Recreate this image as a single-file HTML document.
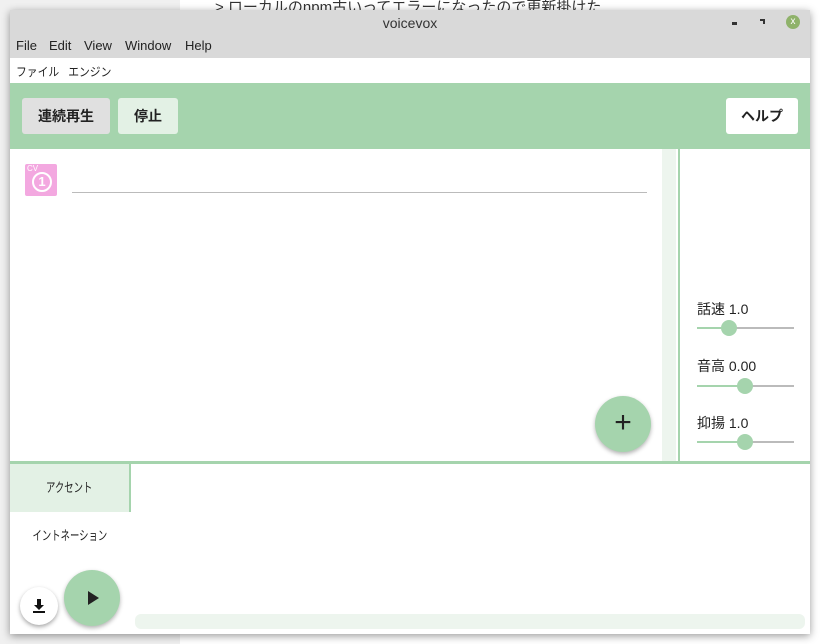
<!DOCTYPE html><html><head><meta charset="utf-8"><style>
body{margin:0;width:820px;height:644px;position:relative;background:#f0f0f0;font-family:"Liberation Sans","Noto Sans CJK JP",sans-serif;overflow:hidden}
.a{position:absolute}
.m{position:absolute;top:38px;font-size:13px;color:#222}
.btn{position:absolute;top:98px;height:36px;border-radius:3px;font-size:14px;font-weight:bold;display:flex;align-items:center;justify-content:center;color:#222}
.sl{position:absolute;left:697px;width:97px;height:2px;background:#bbb}
.sl i{position:absolute;left:0;top:0;height:2px;background:#a5d4ad}
.sl b{position:absolute;top:-7px;width:16px;height:16px;border-radius:50%;background:#a5d4ad}
.lb{position:absolute;left:697px;font-size:14px;color:#222}
.tab{position:absolute;left:10px;width:119px;height:48px;font-size:13px;text-align:center;line-height:48px;color:#222}
.tab span{display:inline-block;transform:scaleX(.72)}
</style></head><body>
<div class="a" style="left:180px;top:0;width:640px;height:644px;background:#fff"></div>
<div class="a" style="left:215px;top:-4px;font-size:15px;color:#333">&gt; ローカルのnpm古いってエラーになったので更新掛けた</div>
<div class="a" style="left:10px;top:10px;width:800px;height:624px;background:#fff;box-shadow:0 2px 8px rgba(0,0,0,.4)"></div>
<div class="a" style="left:10px;top:10px;width:800px;height:48px;background:#d9d9d9"></div>
<div class="a" style="left:10px;top:15px;width:800px;text-align:center;font-size:14px;color:#333">voicevox</div>
<div class="a" style="left:732px;top:22px;width:5px;height:3px;background:#333"></div>
<div class="a" style="left:760px;top:19px;width:5px;height:5px;border-top:2px solid #333;border-right:2px solid #333;box-sizing:border-box"></div>
<div class="a" style="left:786px;top:15px;width:14px;height:14px;border-radius:50%;background:#8fb26a;color:#fff;font-size:10px;text-align:center;line-height:14px">x</div>
<span class="m" style="left:16px">File</span><span class="m" style="left:49px">Edit</span><span class="m" style="left:84px">View</span><span class="m" style="left:125px">Window</span><span class="m" style="left:185px">Help</span>
<div class="a" style="left:16px;top:63px;font-size:12px;color:#222;transform:scaleX(.9);transform-origin:left">ファイル&nbsp;&nbsp; エンジン</div>
<div class="a" style="left:10px;top:83px;width:800px;height:66px;background:#a5d4ad"></div>
<div class="btn" style="left:22px;width:88px;background:#e0e0e0">連続再生</div>
<div class="btn" style="left:118px;width:60px;background:#e3f1e5">停止</div>
<div class="btn" style="left:726px;width:72px;background:#fff">ヘルプ</div>
<div class="a" style="left:25px;top:164px;width:32px;height:32px;background:#f3a8e0;border-radius:2px;color:#fff"><span class="a" style="left:2px;top:0;font-size:8px">CV</span><span class="a" style="left:7px;top:8px;width:16px;height:16px;border:2px solid #fff;border-radius:50%;font-size:13px;font-weight:bold;text-align:center;line-height:16px">1</span></div>
<div class="a" style="left:72px;top:192px;width:575px;height:1px;background:#bbb"></div>
<div class="a" style="left:662px;top:149px;width:14px;height:312px;background:#edf5ee"></div>
<div class="a" style="left:678px;top:149px;width:2px;height:312px;background:#a5d4ad"></div>
<div class="a" style="left:595px;top:396px;width:56px;height:56px;border-radius:50%;background:#a5d4ad;box-shadow:0 2px 4px rgba(0,0,0,.3);color:#222;font-size:30px;text-align:center;line-height:54px">+</div>
<div class="lb" style="top:299px">話速 1.0</div>
<div class="sl" style="top:327px"><i style="width:32px"></i><b style="left:24px"></b></div>
<div class="lb" style="top:356px">音高 0.00</div>
<div class="sl" style="top:385px"><i style="width:48px"></i><b style="left:40px"></b></div>
<div class="lb" style="top:413px">抑揚 1.0</div>
<div class="sl" style="top:441px"><i style="width:48px"></i><b style="left:40px"></b></div>
<div class="a" style="left:10px;top:461px;width:800px;height:3px;background:#a5d4ad"></div>
<div class="tab" style="top:464px;background:#e3f1e5"><span>アクセント</span></div>
<div class="a" style="left:129px;top:464px;width:2px;height:48px;background:#a5d4ad"></div>
<div class="tab" style="top:512px"><span>イントネーション</span></div>
<div class="a" style="left:20px;top:587px;width:38px;height:38px;border-radius:50%;background:#fff;box-shadow:0 2px 4px rgba(0,0,0,.35)"><svg class="a" style="left:11px;top:11px" width="16" height="16" viewBox="0 0 16 16"><path d="M6 1h4v6h3l-5 5-5-5h3z" fill="#111"/><rect x="2" y="13" width="12" height="2" fill="#111"/></svg></div>
<div class="a" style="left:64px;top:570px;width:56px;height:56px;border-radius:50%;background:#a5d4ad;box-shadow:0 2px 4px rgba(0,0,0,.3)"><div class="a" style="left:24px;top:21px;border-left:11px solid #222;border-top:7px solid transparent;border-bottom:7px solid transparent"></div></div>
<div class="a" style="left:135px;top:614px;width:670px;height:15px;border-radius:6px;background:#edf5ee"></div>
</body></html>
